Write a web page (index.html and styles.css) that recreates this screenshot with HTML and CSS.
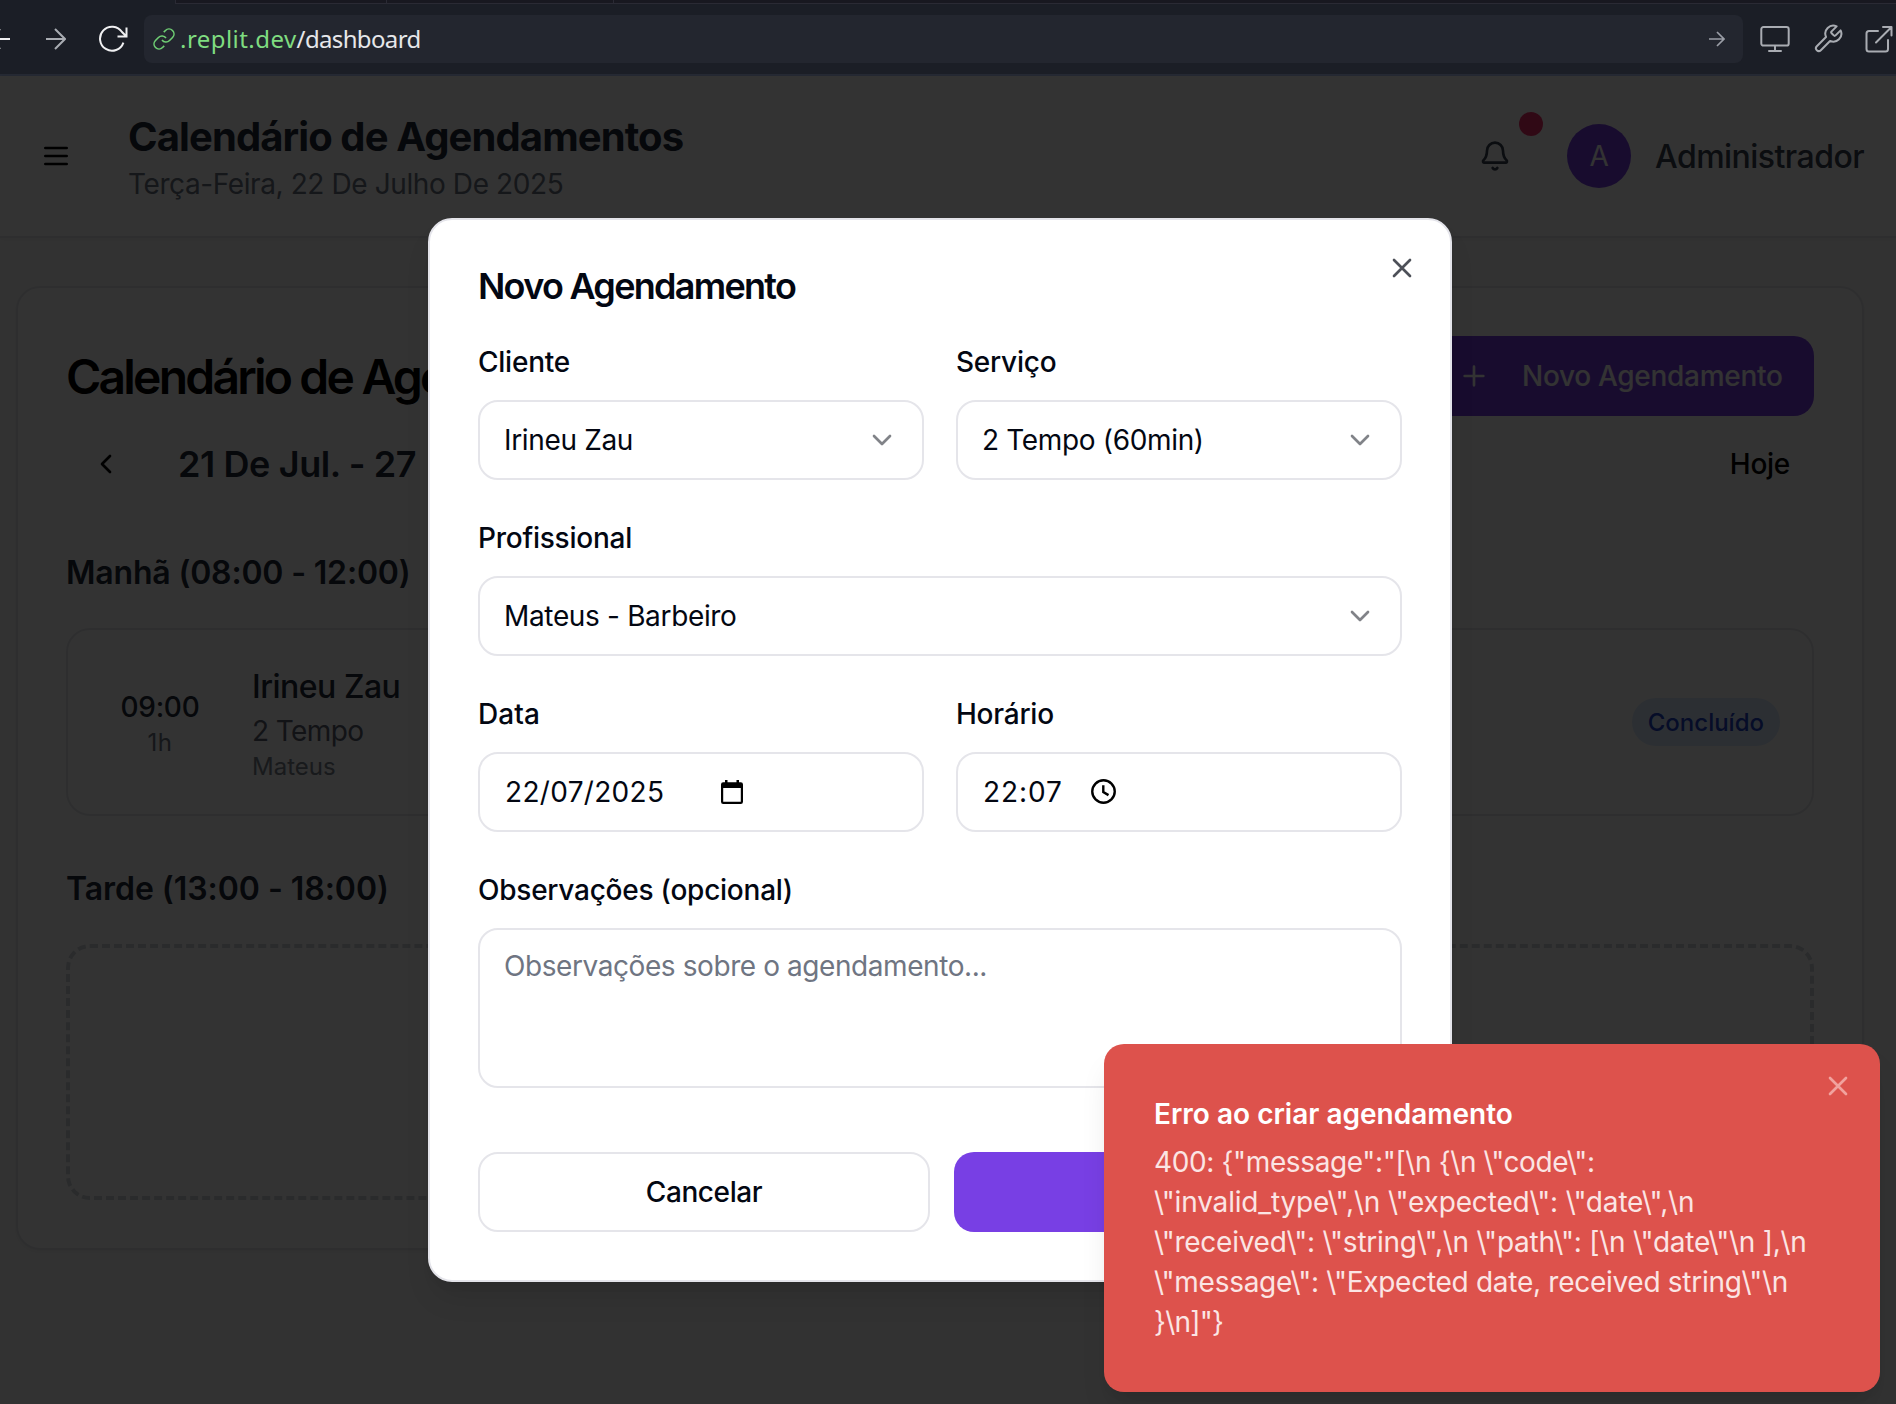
FILE: index.html
```html
<!DOCTYPE html>
<html lang="pt">
<head>
<meta charset="utf-8">
<title>Calendário de Agendamentos</title>
<link rel="stylesheet" href="styles.css">
</head>
<body>
<div class="browser">
  <div class="tabs"><span class="tab tab-a"></span><span class="tab tab-b"></span><span class="tab tab-c"></span></div>
  <div class="toolbar">
    <svg class="nav-back" viewBox="0 0 20 22"><path d="M20 11H1M10 1L1 11l9 10"/></svg>
    <svg class="nav-forward" viewBox="0 0 20 22"><path d="M0 11h19M9 1l10 10-10 10"/></svg>
    <svg class="nav-reload" viewBox="0 0 30 28"><path d="M25.400 17.600A12 12 0 1 1 24 7l4 4M28.500 2.500v9h-9"/></svg>
    <div class="address">
      <svg class="link" viewBox="0 0 24 24"><path d="M10 13a5 5 0 0 0 7.540.54l3-3a5 5 0 0 0-7.070-7.070l-1.720 1.710M14 11a5 5 0 0 0-7.540-.54l-3 3a5 5 0 0 0 7.070 7.070l1.710-1.710"/></svg>
      <span class="url"><span class="host">.replit.dev</span><span class="path">/dashboard</span></span>
      <svg class="go" viewBox="0 0 16 16"><path d="M0 8h15M8 1l7 7-7 7"/></svg>
    </div>
    <svg class="tool monitor" viewBox="0 0 30 28"><path d="M3.500 2h23a2.200 2.200 0 0 1 2.200 2.200v14.200a2.200 2.200 0 0 1-2.200 2.200h-23a2.200 2.200 0 0 1-2.200-2.200V4.200A2.200 2.200 0 0 1 3.500 2zM15 21v5M9 26h12"/></svg>
    <svg class="tool wrench" viewBox="0 0 24 24"><path d="M14.700 6.300a1 1 0 0 0 0 1.400l1.600 1.600a1 1 0 0 0 1.400 0l3.770-3.770a6 6 0 0 1-7.940 7.940l-6.910 6.910a2.120 2.120 0 0 1-3-3l6.910-6.910a6 6 0 0 1 7.940-7.940l-3.760 3.760z"/></svg>
    <svg class="tool external" viewBox="0 0 28 28"><path d="M13 6H4a2.500 2.500 0 0 0-2.500 2.500V24A2.500 2.500 0 0 0 4 26.500h16.500A2.500 2.500 0 0 0 23 24v-9M18 2h8.500v8.500M26.500 2L11 17.500"/></svg>
  </div>
</div>

<div class="app">
  <header class="header">
    <svg class="icon menu" viewBox="0 0 24 24"><path d="M4 6h16M4 12h16M4 18h16"/></svg>
    <div class="heading">
      <h1>Calendário de Agendamentos</h1>
      <p class="today">Terça-Feira, 22 De Julho De 2025</p>
    </div>
    <div class="bell-wrap">
      <svg class="icon bell" viewBox="0 0 24 24"><path d="M10.268 21a2 2 0 0 0 3.464 0M3.262 15.326A1 1 0 0 0 4 17h16a1 1 0 0 0 .740-1.673C19.410 13.956 18 12.499 18 8A6 6 0 0 0 6 8c0 4.499-1.411 5.956-2.738 7.326"/></svg>
      <span class="dot"></span>
    </div>
    <span class="avatar">A</span>
    <span class="user">Administrador</span>
  </header>

  <main class="card">
    <div class="card-head">
      <h2>Calendário de Agendamentos</h2>
      <button class="new"><svg class="icon" viewBox="0 0 24 24"><path d="M5 12h14M12 5v14"/></svg><span class="new-label">Novo Agendamento</span></button>
    </div>
    <div class="week">
      <svg class="icon" viewBox="0 0 24 24"><path d="m15 18-6-6 6-6"/></svg>
      <span class="range">21 De Jul. - 27</span>
      <span class="hoje">Hoje</span>
    </div>
    <h3 class="manha">Manhã (08:00 - 12:00)</h3>
    <div class="appointment">
      <div class="slot"><span class="hour">09:00</span><span class="duration">1h</span></div>
      <div class="who"><span class="client">Irineu Zau</span><span class="service">2 Tempo</span><span class="staff">Mateus</span></div>
      <span class="badge">Concluído</span>
    </div>
    <h3 class="tarde">Tarde (13:00 - 18:00)</h3>
    <div class="empty"></div>
  </main>
  <div class="overlay"></div>
</div>

<section class="modal">
  <svg class="icon modal-close" viewBox="0 0 24 24"><path d="M18 6 6 18M6 6l12 12"/></svg>
  <h2 class="modal-title">Novo Agendamento</h2>
  <div class="form">
    <div class="field"><label>Cliente</label><div class="control"><span>Irineu Zau</span><svg class="icon chevron" viewBox="0 0 24 24"><path d="m6 9 6 6 6-6"/></svg></div></div>
    <div class="field"><label>Serviço</label><div class="control"><span>2 Tempo (60min)</span><svg class="icon chevron" viewBox="0 0 24 24"><path d="m6 9 6 6 6-6"/></svg></div></div>
    <div class="field wide"><label>Profissional</label><div class="control"><span>Mateus - Barbeiro</span><svg class="icon chevron" viewBox="0 0 24 24"><path d="m6 9 6 6 6-6"/></svg></div></div>
    <div class="field"><label class="loose">Data</label><div class="control picker"><span class="date">22/07/2025</span><svg class="calendar" viewBox="0 0 22 24"><path d="M4 0h2.500v2.300h9V0H18v2.300h1.800A2.200 2.200 0 0 1 22 4.500v17.300a2.200 2.200 0 0 1-2.200 2.200H2.200A2.200 2.200 0 0 1 0 21.800V4.500a2.200 2.200 0 0 1 2.200-2.200H4zM2.200 8v13.800h17.600V8z"/></svg></div></div>
    <div class="field"><label>Horário</label><div class="control picker"><span class="time">22:07</span><svg class="clock" viewBox="0 0 24 24"><circle cx="12" cy="12" r="10.800"/><path d="M11.800 6v6.500l5 3"/></svg></div></div>
    <div class="field wide"><label>Observações (opcional)</label><div class="control area"><span>Observações sobre o agendamento...</span></div></div>
  </div>
  <div class="actions"><button class="cancel">Cancelar</button><button class="submit"></button></div>
</section>

<aside class="toast">
  <svg class="icon toast-close" viewBox="0 0 24 24"><path d="M18 6 6 18M6 6l12 12"/></svg>
  <strong>Erro ao criar agendamento</strong>
  <p class="message"><span class="l1">400: {"message":"[\n {\n \"code\":</span><br><span class="l2">\"invalid_type\",\n \"expected\": \"date\",\n</span><br><span class="l3">\"received\": \"string\",\n \"path\": [\n \"date\"\n ],\n</span><br><span class="l4">\"message\": \"Expected date, received string\"\n</span><br><span class="l5">}\n]"}</span></p>
</aside>
</body>
</html>
```
FILE: styles.css
```css
* { box-sizing: border-box; }
body { margin: 0; width: 1896px; height: 1404px; overflow: hidden; position: relative; font-family: Inter, "Liberation Sans", sans-serif; font-size: 28px; background: #323232; }
h1, h2, h3, p { margin: 0; }
button { font: inherit; border: 0; padding: 0; }
svg { fill: none; stroke: currentColor; flex: none; display: block; }

/* Browser toolbar */
.browser { height: 76px; background: #1b1e26; border-bottom: 2px solid #252933; }
.tabs { height: 4px; margin-left: 175px; display: flex; background: #181820; border-bottom: 1px solid #2a2a34; }
.tab { border-left: 1px solid #2a2a34; }
.tab-a { width: 211px; }
.tab-b { width: 227px; }
.tab-c { flex: 1; }
.toolbar { height: 70px; display: flex; align-items: center; color: #a9acb2; }
.nav-back { width: 20px; height: 22px; margin-left: -10px; stroke-width: 2; color: #f0f0f2; }
.nav-forward { width: 20px; height: 22px; margin-left: 36px; stroke-width: 2; }
.nav-reload { width: 30px; height: 28px; margin-left: 32px; stroke-width: 2; color: #f0f0f2; }
.address { width: 1599px; height: 48px; margin-left: 16px; padding: 0 18px 0 8px; border-radius: 8px; background: #23262f; display: flex; align-items: center; }
.link { width: 24px; height: 24px; color: #6fce74; stroke-width: 1.6; }
.url { margin-left: 4px; font-family: "Noto Sans", sans-serif; font-size: 24px; line-height: 32px; flex: 1; color: #e6e7ea; }
.host { color: #7fdc80; letter-spacing: .45px; }
.path { letter-spacing: -.65px; }
.go { width: 16px; height: 16px; stroke-width: 1.7; color: #9a9da6; }
.tool { stroke-width: 2; stroke-linejoin: round; stroke-linecap: round; }
.monitor { width: 30px; height: 28px; margin-left: 17px; }
.wrench { width: 32px; height: 32px; margin-left: 22px; stroke-width: 1.5; }
.external { width: 28px; height: 28px; margin-left: 21px; }

/* Dashboard behind the dialog */
.icon { width: 32px; height: 32px; stroke-width: 2; stroke-linecap: round; stroke-linejoin: round; }
.app { position: relative; height: 1328px; display: flow-root; background: #fafafa; }
.overlay { position: absolute; inset: 0; background: rgba(0, 0, 0, .8); }
.header { height: 162px; padding: 0 32px 0 40px; display: flex; align-items: center; background: #fff; border-bottom: 2px solid #e5e7eb; color: #000; box-shadow: 0 2px 4px rgba(0, 0, 0, .04); }
.heading { margin-left: 56px; flex: 1; padding-top: 4px; }
h1 { font-size: 40px; line-height: 50px; font-weight: 700; letter-spacing: -.9px; color: #1f2937; }
.today { margin-top: 2px; line-height: 40px; letter-spacing: -.4px; color: #6b7280; }
.bell-wrap { position: relative; width: 32px; margin-right: 56px; color: #374151; }
.dot { position: absolute; left: 40px; top: -28px; width: 24px; height: 24px; border-radius: 50%; background: #f0306a; }
.avatar { width: 64px; height: 64px; border-radius: 50%; background: #783fe4; color: #fff; display: flex; align-items: center; justify-content: center; }
.user { margin-left: 24px; padding-top: 1px; font-size: 32px; font-weight: 500; letter-spacing: -.55px; color: #374151; }

.card { margin: 48px 32px 0 16px; height: 964px; padding: 48px; border: 2px solid #e5e7eb; border-radius: 24px; background: #fff; box-shadow: 0 2px 4px rgba(0, 0, 0, .05); color: #1f2937; }
.card-head { height: 80px; display: flex; justify-content: space-between; align-items: center; color: #000; }
.card h2 { font-size: 48px; font-weight: 600; letter-spacing: -2.8px; white-space: nowrap; }
.new { width: 399px; height: 80px; padding-left: 43px; border-radius: 20px; background: #783fe4; color: #fff; font-weight: 500; display: flex; align-items: center; }
.new-label { margin-left: 32px; letter-spacing: -.3px; white-space: nowrap; }
.week { margin-top: 16px; height: 64px; padding: 0 24px; display: flex; align-items: center; color: #000; }
.range { margin-left: 56px; flex: 1; font-size: 36px; font-weight: 600; letter-spacing: -.4px; color: #1f2937; }
.hoje { font-weight: 500; letter-spacing: -.27px; }
h3 { font-size: 32px; font-weight: 600; line-height: 48px; }
.manha { margin-top: 53px; letter-spacing: -.18px; }
.appointment { margin-top: 31px; height: 188px; padding: 0 32px; border: 2px solid #e5e7eb; border-radius: 24px; display: flex; align-items: center; }
.slot { width: 120px; padding-top: 1px; display: flex; flex-direction: column; align-items: center; }
.hour { font-weight: 500; line-height: 40px; letter-spacing: -.3px; }
.duration { font-size: 24px; line-height: 32px; letter-spacing: .6px; color: #6b7280; }
.who { margin-left: 32px; padding-top: 2px; flex: 1; display: flex; flex-direction: column; }
.client { font-size: 32px; font-weight: 500; line-height: 48px; letter-spacing: -.5px; }
.service { line-height: 40px; letter-spacing: -.6px; color: #5b6270; }
.staff { font-size: 24px; line-height: 32px; color: #7a808c; }
.badge { height: 48px; padding: 1px 16px 0; border-radius: 24px; background: #dbeafe; color: #2242c8; font-size: 24px; font-weight: 500; line-height: 48px; }
.tarde { margin-top: 49px; letter-spacing: -.04px; }
.empty { margin-top: 31px; height: 256px; border: 4px dashed #d1d5db; border-radius: 24px; }

/* Appointment dialog */
.modal { position: absolute; left: 428px; top: 218px; width: 1024px; height: 1064px; padding: 48px; border: 2px solid #e4e4ea; border-radius: 24px; background: #fff; color: #030712; box-shadow: 0 20px 30px -6px rgba(0, 0, 0, .1), 0 8px 12px -8px rgba(0, 0, 0, .1); }
.modal-close { position: absolute; right: 32px; top: 32px; color: #4d5058; }
.modal-title { font-size: 36px; line-height: 36px; font-weight: 600; letter-spacing: -1.72px; }
.form { margin-top: 32px; display: grid; grid-template-columns: 446px 446px; gap: 32px; letter-spacing: -.34px; }
.wide { grid-column: span 2; }
.field label { display: block; height: 56px; line-height: 28px; padding-top: 12px; font-weight: 500; margin-bottom: 8px; letter-spacing: -.24px; }
.field .loose { letter-spacing: .1px; }
.control { height: 80px; padding: 0 24px; border: 2px solid #e5e5ea; border-radius: 20px; display: flex; align-items: center; justify-content: space-between; }
.chevron { color: #818388; }
.picker { justify-content: flex-start; padding-left: 25px; }
.date { width: 216px; letter-spacing: .32px; }
.time { width: 108px; letter-spacing: .92px; }
.calendar { width: 22px; height: 24px; margin-bottom: 1px; fill: #000; stroke: none; }
.clock { width: 25px; height: 25px; margin-bottom: 1px; stroke: #000; stroke-width: 2.3; }
.area { height: 160px; padding-top: 16px; align-items: flex-start; line-height: 40px; letter-spacing: -.42px; color: #6f7582; }
.actions { margin-top: 64px; display: flex; gap: 24px; }
.cancel { width: 452px; height: 80px; border: 2px solid #e5e5ea; border-radius: 20px; background: #fff; color: #030712; font-weight: 500; letter-spacing: -.4px; }
.submit { width: 448px; height: 80px; border-radius: 20px; background: #783fe4; }

/* Error toast */
.toast { position: absolute; left: 1104px; top: 1044px; width: 776px; height: 348px; padding: 50px; border-radius: 20px; background: #dd524c; color: #fff; box-shadow: 0 20px 30px -6px rgba(0, 0, 0, .1), 0 8px 12px -8px rgba(0, 0, 0, .1); }
.toast strong { display: block; font-weight: 600; line-height: 40px; }
.message { margin-top: 8px; line-height: 40px; white-space: nowrap; color: #fbe5e4; }
.l1 { letter-spacing: -.37px; }
.l2 { letter-spacing: -.17px; }
.l3 { letter-spacing: -.25px; }
.l4 { letter-spacing: -.28px; }
.l5 { letter-spacing: -.76px; }
.toast-close { position: absolute; right: 26px; top: 26px; color: #f1a29e; }
```
